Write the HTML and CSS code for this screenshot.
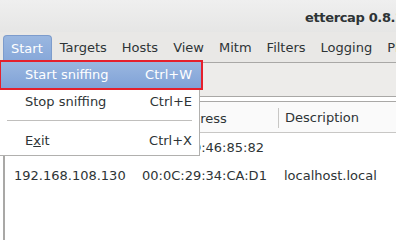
FILE: index.html
```html
<!DOCTYPE html>
<html lang="en">
<head>
  <meta charset="UTF-8" />
  <title>ettercap</title>
  <link rel="stylesheet" href="styles.css">
</head>
<body>
  <div class="window">
    <div class="titlebar"><span class="title">ettercap 0.8.2</span></div>

    <div class="menubar">
      <span class="menu open">Start</span>
      <span class="menu">Targets</span>
      <span class="menu">Hosts</span>
      <span class="menu">View</span>
      <span class="menu">Mitm</span>
      <span class="menu">Filters</span>
      <span class="menu">Logging</span>
      <span class="menu">Plugins</span>
    </div>

    <div class="toolbar"></div>

    <div class="hosts">
      <div class="row head">
        <span class="c-ip">IP Address</span>
        <span class="c-mac">MAC Address</span>
        <span class="c-desc">Description</span>
      </div>
      <div class="row">
        <span class="c-ip">192.168.108.1</span>
        <span class="c-mac">00:0C:29:46:85:82</span>
        <span class="c-desc"></span>
      </div>
      <div class="row">
        <span class="c-ip">192.168.108.130</span>
        <span class="c-mac">00:0C:29:34:CA:D1</span>
        <span class="c-desc">localhost.local</span>
      </div>
    </div>

    <!-- menu Start ouvert -->
    <div class="dropdown">
      <div class="item active">
        <span>Start sniffing</span><span>Ctrl+W</span>
      </div>
      <div class="item">
        <span>Stop sniffing</span><span>Ctrl+E</span>
      </div>
      <div class="sep"></div>
      <div class="item">
        <span>E<u>x</u>it</span><span>Ctrl+X</span>
      </div>
    </div>
  </div>
</body>
</html>
```

FILE: styles.css
```css
* {
  box-sizing: border-box;
}

body {
  margin: 0;
  font-family: "DejaVu Sans", sans-serif;
  font-size: 13px;
  color: #2e3436;
  background: #fff;
}

.window {
  position: relative;
  width: 396px;
  height: 240px;
  overflow: hidden;
}

.titlebar {
  height: 32px;
  padding-left: 305px;
  padding-top: 10px;
  background: linear-gradient(#efefef, #e6e6e5);
  white-space: nowrap;
}

.title {
  font-weight: bold;
  font-size: 13px;
  letter-spacing: -0.35px;
  color: #2e3436;
}

.menubar {
  height: 31px;
  display: flex;
  align-items: flex-end;
  padding-left: 3px;
  background: #e9e8e6;
  border-bottom: 1px solid #a9a8a6;
  white-space: nowrap;
}

.menu {
  height: 27px;
  line-height: 25px;
  padding: 0 8px 0 7px;
  color: #2e3436;
}

.menu.open {
  color: #fff;
  background: linear-gradient(#9ab7e0, #86a7d9);
  border: 1px solid #7d9ccc;
  border-bottom: none;
  border-radius: 4px 4px 0 0;
  margin-right: 1px;
}

.toolbar {
  height: 34px;
  background: #edecea;
  border-bottom: 1px solid #a9a8a6;
}

.hosts {
  margin-top: 4px;
  margin-left: 4px;
  border-top: 1px solid #a9a8a6;
  border-left: 1px solid #a9a8a6;
  box-shadow: -3px 0 0 -2px #a9a8a6;
  height: 200px;
}

.row {
  display: flex;
  height: 28px;
  align-items: center;
  white-space: nowrap;
}

.row.head {
  height: 31px;
  padding-top: 2px;
  border-bottom: 1px solid #c8c7c5;
  background: #fafafa;
}

.c-ip {
  width: 128px;
  padding-left: 9px;
}

.c-mac {
  width: 145px;
  padding-left: 9px;
}

.c-desc {
  padding-left: 6px;
}

.head .c-desc {
  border-left: 1px solid #c8c7c5;
  height: 20px;
  line-height: 20px;
}

.dropdown {
  position: absolute;
  top: 61px;
  left: 0;
  width: 200px;
  padding: 1px 0 1px;
  background: #fff;
  border: 1px solid #b1b0ae;
  border-top: none;
  border-left: none;
}

.item {
  display: flex;
  justify-content: space-between;
  height: 27px;
  line-height: 27px;
  padding: 0 7px 0 25px;
  color: #2e3436;
}

.item.active {
  height: 26px;
  line-height: 25px;
  color: #fff;
  background: linear-gradient(#9ab7e0, #80a2d7);
  outline: 2px solid #e5202c;
  outline-offset: 0;
  margin: 0 -2px 0 1px;
  padding-right: 9px;
  padding-left: 24px;
}

.sep {
  height: 1px;
  margin: 5px 7px 6px;
  background: #c0bfbd;
}
```
